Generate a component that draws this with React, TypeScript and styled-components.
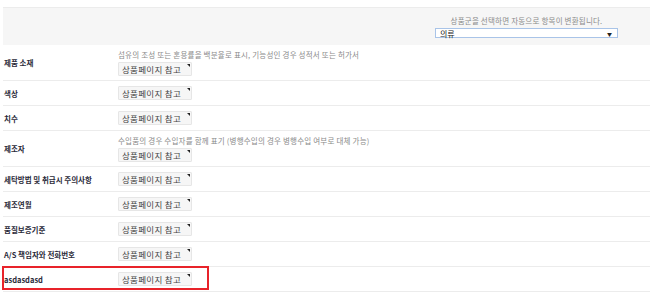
import styled, { createGlobalStyle } from "styled-components";

const GlobalStyle = createGlobalStyle`
  html, body {
    margin: 0;
    padding: 0;
    background: #fff;
    font-family: "Noto Sans CJK KR", "Noto Sans", sans-serif;
    color: #333;
  }
`;

const rows = [
  {
    label: "제품 소재",
    hint: "섬유의 조성 또는 혼용률을 백분율로 표시, 기능성인 경우 성적서 또는 허가서",
  },
  { label: "색상" },
  { label: "치수" },
  {
    label: "제조자",
    hint: "수입품의 경우 수입자를 함께 표기 (병행수입의 경우 병행수입 여부로 대체 가능)",
  },
  { label: "세탁방법 및 취급시 주의사항" },
  { label: "제조연월" },
  { label: "품질보증기준" },
  { label: "A/S 책임자와 전화번호" },
  { label: "asdasdasd", highlighted: true },
];

const Page = styled.div`
  padding: 7px 0 0 3px;
`;

const Header = styled.div`
  height: 37px;
  background: #f6f6f6;
  border-top: 1px solid #ececec;
  display: flex;
  justify-content: flex-end;
  padding-right: 32px;
`;

const CategoryBox = styled.div`
  width: 183px;
  display: flex;
  flex-direction: column;
  align-items: center;
  padding-top: 8px;
  gap: 2px;
`;

const HeaderHint = styled.div`
  font-size: 7.5px;
  line-height: 10px;
  color: #8a8a8a;
  letter-spacing: 0.2px;
`;

const Select = styled.div`
  box-sizing: border-box;
  width: 183px;
  height: 10px;
  border: 1px solid #a9c4e8;
  background: #fff;
  display: flex;
  align-items: center;
  justify-content: space-between;
  padding: 0 5px 0 4px;
  font-size: 8px;
  color: #222;
`;

const Arrow = styled.span`
  font-size: 5px;
  color: #222;
`;

const Row = styled.div<{ $tall: boolean }>`
  position: relative;
  display: grid;
  grid-template-columns: 115px 1fr;
  align-items: center;
  height: ${({ $tall }) => ($tall ? "35px" : "24px")};
  border-bottom: 1px solid #ececec;
`;

const Label = styled.div`
  padding-left: 1px;
  font-size: 7.5px;
  font-weight: 700;
  color: #2b2b3a;
  white-space: nowrap;
`;

const Value = styled.div`
  display: flex;
  flex-direction: column;
  gap: 2px;
`;

const Hint = styled.div`
  font-size: 7.5px;
  line-height: 10px;
  color: #8a8a8a;
  white-space: nowrap;
  letter-spacing: 0.2px;
`;

const Field = styled.div`
  position: relative;
  box-sizing: border-box;
  width: 74px;
  height: 14px;
  background: #f6f6f6;
  border: 1px solid #e6e6e6;
  border-radius: 1px;
  padding-left: 3px;
  font-size: 8.5px;
  line-height: 12px;
  color: #444;
  letter-spacing: 0.3px;

  &::after {
    content: "";
    position: absolute;
    top: 1px;
    right: 1px;
    border-style: solid;
    border-width: 0 3px 3px 0;
    border-color: transparent #222 transparent transparent;
  }
`;

const Highlight = styled.div`
  position: absolute;
  left: -1px;
  top: -1px;
  width: 203px;
  height: 20px;
  border: 2px solid #e8232a;
  pointer-events: none;
`;

export default function App() {
  return (
    <>
      <GlobalStyle />
      <Page>
        <Header>
          <CategoryBox>
            <HeaderHint>상품군을 선택하면 자동으로 항목이 변환됩니다.</HeaderHint>
            <Select>
              <span>의류</span>
              <Arrow>▼</Arrow>
            </Select>
          </CategoryBox>
        </Header>
        {rows.map((row) => (
          <Row key={row.label} $tall={!!row.hint}>
            <Label>{row.label}</Label>
            <Value>
              {row.hint && <Hint>{row.hint}</Hint>}
              <Field>상품페이지 참고</Field>
            </Value>
            {row.highlighted && <Highlight />}
          </Row>
        ))}
      </Page>
    </>
  );
}
